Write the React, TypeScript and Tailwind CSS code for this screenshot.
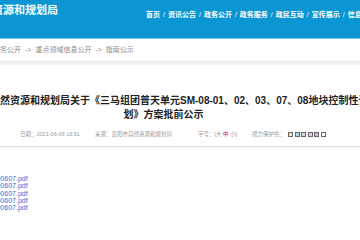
const swatches = ["bg-[#f3eaa2]", "bg-[#a9d5f2]", "bg-[#d8d8d8]", "bg-[#ecc8de]", "bg-[#cdb2e6]", "bg-white"];

const files = [
  "附件1_20200607.pdf",
  "附件2_20200607.pdf",
  "附件3_20200607.pdf",
  "附件4_20200607.pdf",
  "附件5_20200607.pdf",
];

export default function App() {
  return (
    <div className="w-[360px] h-[240px] overflow-hidden bg-white font-['Liberation_Sans','Noto_Sans_CJK_SC',sans-serif]">
      {/* top banner */}
      <header className="h-[39px] bg-[#0a96d3] border-b border-[#74c4ec] flex items-start whitespace-nowrap">
        <div className="-ml-[63px] pt-[3px] text-[11px] leading-[14px] font-bold text-white shrink-0">
          贵阳市自然资源和规划局
        </div>
        <nav className="ml-[88px] pt-[11px] text-[7px] leading-[8px] font-bold text-white flex shrink-0">
          {["首页", "资讯公告", "政务公开", "政务服务", "政民互动", "宣传展示", "信息公开"].map((n, i) => (
            <span key={n} className="flex">
              {i > 0 && <span className="mx-[3px] font-normal">/</span>}
              {n}
            </span>
          ))}
        </nav>
      </header>

      <div className="-ml-[40px] w-[425px]">
        {/* breadcrumb */}
        <div className="h-[22px] flex items-center pl-[33px] text-[7px] text-[#8a8a8a] whitespace-nowrap">
          政务公开<span className="mx-[4px]">-&gt;</span>重点领域信息公开<span className="mx-[4px]">-&gt;</span>指南公示
        </div>
        <div className="h-[4px] bg-[#f1f3f6] border-t border-[#e3e7ec]" />

        {/* article title */}
        <h1 className="mt-[29px] pr-[18px] text-center text-[10px] leading-[14px] font-bold text-[#222] whitespace-nowrap">
          贵阳市自然资源和规划局关于《三马组团普天单元SM-08-01、02、03、07、08地块控制性详
          <br />
          划》方案批前公示
        </h1>

        {/* meta */}
        <div className="mt-[8px] h-[8px] flex items-center text-[5.5px] text-[#9a9a9a] whitespace-nowrap pl-[60px]">
          <span className="w-[75px]">日期：2021-06-09 16:51</span>
          <span className="w-[103px]">来源：贵阳市自然资源和规划局</span>
          <span className="w-[54px]">
            字号：[大 <span className="text-[#e60012]">中</span> 小]
          </span>
          <span className="w-[36px]">视力保护色：</span>
          <span className="flex gap-[1.5px]">
            {swatches.map((c) => (
              <span key={c} className={`w-[5px] h-[5px] border border-[#666] ${c}`} />
            ))}
          </span>
        </div>
        <div className="mt-[8px] h-[2px] border-t border-[#e4e4e4] bg-[#f7f7f7]" />

        {/* attachments */}
        <div className="mt-[27px] pl-[25px] flex flex-col text-[7px] leading-[7.3px] text-[#2f6fdc] whitespace-nowrap">
          {files.map((f) => (
            <a key={f} href="#" className="-ml-[22px]">
              {f}
            </a>
          ))}
        </div>
      </div>
    </div>
  );
}
